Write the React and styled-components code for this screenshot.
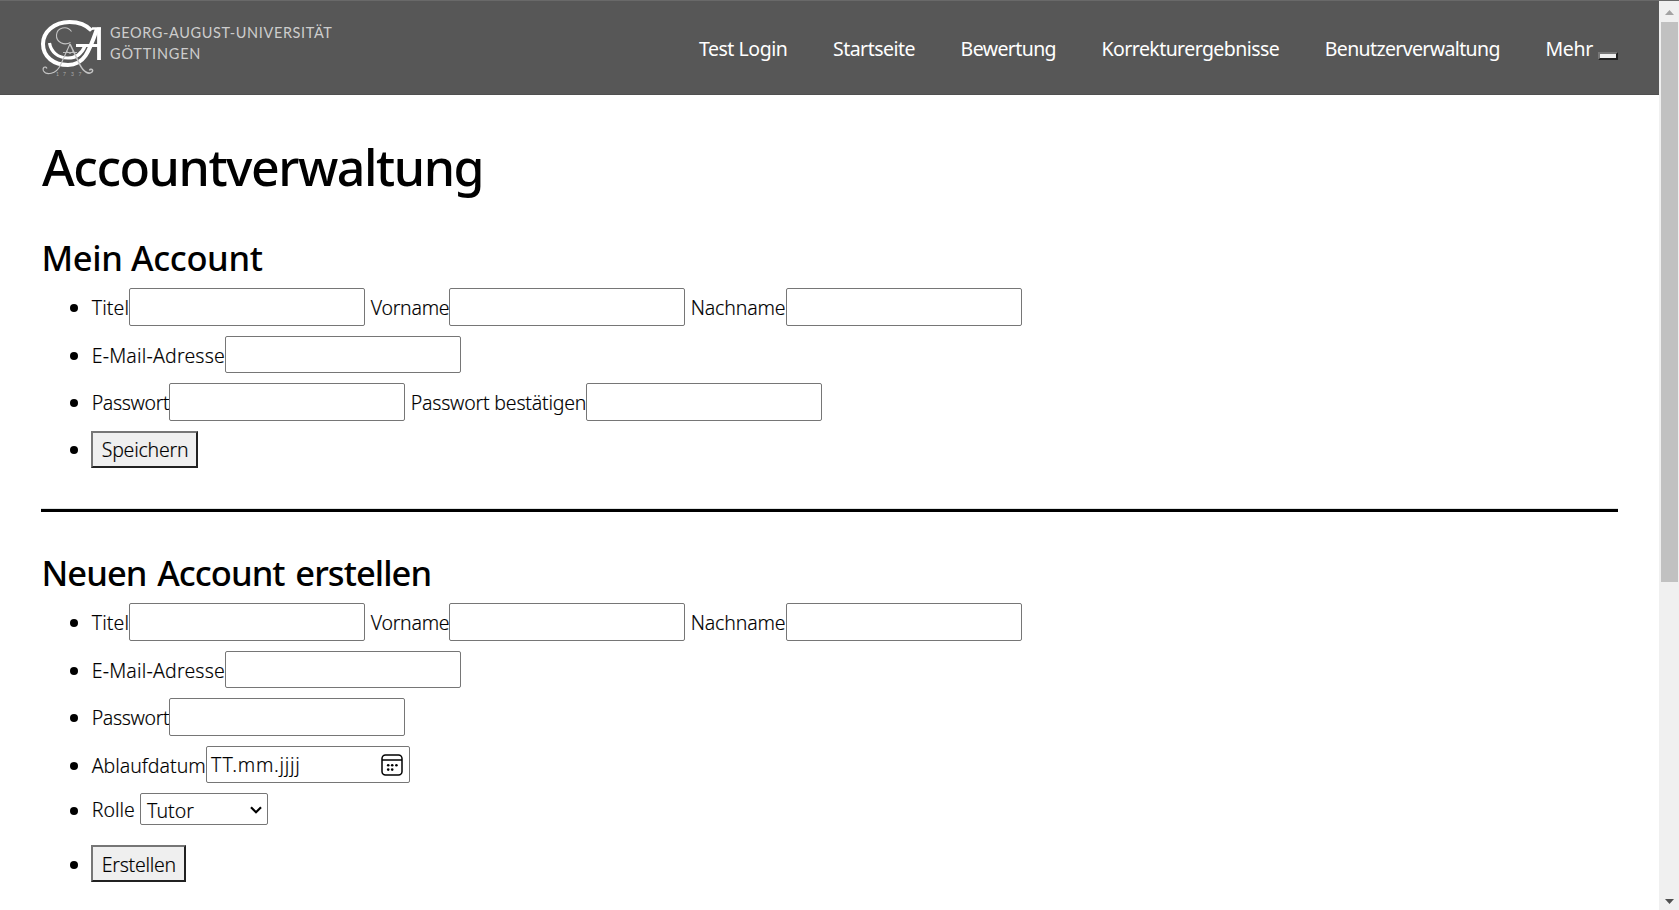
import React from 'react';
import styled, { createGlobalStyle, css } from 'styled-components';

const GlobalStyle = createGlobalStyle`
  * { box-sizing: border-box; }
  body {
    margin: 0;
    overflow: hidden;
    background: #fff;
    color: #000;
    font-family: 'Noto Sans', 'Open Sans', sans-serif;
    font-size: 19.5px;
  }
`;

const Window = styled.div`
  display: grid;
  grid-template-columns: 1fr 20px;
  height: 910px;
  border-top: 1px solid #696969;
  overflow: hidden;
`;

const Page = styled.div`
  min-width: 0;
`;

const Header = styled.header`
  display: flex;
  justify-content: space-between;
  align-items: center;
  height: 94px;
  padding: 0 41px 0 40px;
  background: #575757;
  border-bottom: 1px solid #4f4f4f;
  color: #fff;
`;

const Brand = styled.div`
  display: flex;
  gap: 8px;
`;

const BrandMark = styled.svg`
  display: block;
  width: 62px;
  height: 60px;
`;

const BrandName = styled.div`
  padding-top: 4px;
  font: 400 14.5px/21px Lato, sans-serif;
  color: #cdcdcd;
  white-space: nowrap;
`;

const BrandLine = styled.div`
  letter-spacing: ${(p) => p.$spacing}px;
`;

const Nav = styled.nav`
  display: flex;
  align-items: center;
  gap: 45.6px;
`;

const NavLink = styled.a`
  padding-top: 2px;
  line-height: 26px;
  white-space: nowrap;
  letter-spacing: ${(p) => p.$spacing}px;
`;

const MoreMenu = styled.div`
  display: flex;
  align-items: center;
  gap: 5px;
`;

const raised = css`
  border: 2px solid;
  border-color: #767676 #212121 #212121 #767676;
  border-radius: 0;
  background: #efefef;
  color: #000;
`;

const MoreButton = styled.button`
  ${raised}
  width: 20px;
  height: 8px;
  margin: 16px 0 0;
  padding: 0;
`;

const Main = styled.main`
  padding: 42px 41px 0;
`;

const Title = styled.h1`
  margin: 0 0 40px;
  padding-left: 1px;
  font-size: 50px;
  line-height: 60px;
  font-weight: 500;
  letter-spacing: -1.45px;
`;

const SectionTitle = styled.h2`
  margin: 0 0 9px;
  padding-left: 0.5px;
  font-size: 34.5px;
  line-height: 42px;
  font-weight: 500;
  letter-spacing: ${(p) => p.$spacing}px;
  word-spacing: ${(p) => p.$wordSpacing ?? 0}px;
`;

const Divider = styled.hr`
  height: 4px;
  margin: 40px 0;
  border: 0;
  border-top: 1px solid #dfe3e3;
  background: #000;
`;

const FieldList = styled.ul`
  margin: 0;
  padding: 0 0 0 29px;
  list-style: none;
`;

const Row = styled.li`
  display: flex;
  height: ${(p) => p.$height}px;
  margin-bottom: ${(p) => p.$gap ?? 10}px;
  font-weight: 350;
  -webkit-text-stroke: 0.15px #000;

  &:last-child { margin-bottom: 0; }

  &::before {
    content: '';
    flex: none;
    width: 8px;
    height: 8px;
    margin: ${(p) => p.$bullet ?? 16}px 13px 0 0;
    border-radius: 50%;
    background: #000;
  }
`;

const Label = styled.label`
  flex: none;
  width: ${(p) => p.$width}px;
  padding-left: 0.7px;
  line-height: ${(p) => p.$line ?? 39}px;
  letter-spacing: ${(p) => p.$spacing ?? 0}px;
  white-space: nowrap;
`;

const fieldBox = css`
  height: 100%;
  border: 1px solid #767676;
  border-radius: 2px;
  background: #fff;
`;

const TextInput = styled.input`
  ${fieldBox}
  width: 236px;
  margin: 0 5px 0 0;
  padding: 1px 5px;
  font: inherit;
  outline: none;
`;

const DateInput = styled.div`
  ${fieldBox}
  display: flex;
  justify-content: space-between;
  width: 204px;
  padding: 0 6px 0 4px;
  line-height: 36px;
  letter-spacing: 0.7px;
`;

const CalendarIcon = styled.svg`
  width: 22px;
  height: 22px;
  margin-top: 7px;
`;

const Select = styled.div`
  ${fieldBox}
  display: flex;
  justify-content: space-between;
  width: 128px;
  padding: 0 5px 0 6px;
  line-height: 34px;
`;

const Chevron = styled.svg`
  width: 12px;
  height: 8px;
  margin-top: 12px;
`;

const Button = styled.button`
  ${raised}
  width: ${(p) => p.$width}px;
  height: 37px;
  padding: ${(p) => p.$drop ?? 0}px 0 0 8.7px;
  font: inherit;
  line-height: 33px;
  text-align: left;
  white-space: nowrap;
  letter-spacing: ${(p) => p.$spacing}px;
`;

const Scrollbar = styled.div`
  display: flex;
  flex-direction: column;
  align-items: center;
  padding-left: 1px;
  background: #f0f0f0;
`;

const ScrollArrow = styled.svg`
  flex: none;
  width: 19px;
  height: 21px;
`;

const ScrollThumb = styled.div`
  width: 17px;
  height: 560px;
  background: #c1c1c1;
`;

const ScrollTrack = styled.div`
  flex: 1;
`;

const NAV = [
  ['Test Login', -0.45],
  ['Startseite', -0.52],
  ['Bewertung', -0.6],
  ['Korrekturergebnisse', -0.57],
  ['Benutzerverwaltung', -0.63],
];

function Logo() {
  return (
    <Brand>
      <BrandMark viewBox="40 18 62 60" fill="none">
        <g stroke="#fff">
          <path d="M91.5 30.5C86 24.5 78 22 69.500 22C54 22 43 32 43 44C43 57 54 65 68 65C84 65 89 52 97 29" strokeWidth="4" />
          <path d="M49.500 43C51 52 58 58 68 58C77 58 82 53 85 46" strokeWidth="3.200" />
          <path d="M76 45.500H99" strokeWidth="3" />
          <path d="M92 28.500H101" strokeWidth="2.500" />
          <path d="M99 27.500V60" strokeWidth="3.800" />
        </g>
        <g stroke="#c4c4c4" strokeWidth="1.100">
          <path d="M71.500 31.500C67 25 57 27.500 56.500 35C56 42 64 46 70.500 42.500" />
          <path d="M70 44L60.500 65C56 75 46 75 43.500 71C42 67.500 45.500 65.500 47 68.500" />
          <path d="M70 44L79.500 64C84 73 89 74.500 92 72C94 69.500 90.500 68 89.500 70.500" strokeWidth="1.600" />
          <path d="M63 52.500H77M66 51L70 53.500L74 51" strokeWidth="0.900" />
        </g>
        <text x="56 63 71 78.500" y="75.500" fill="#a9a9a9" fontFamily="Lato, sans-serif" fontSize="5">1737</text>
      </BrandMark>
      <BrandName>
        <BrandLine $spacing={0.62}>GEORG-AUGUST-UNIVERSITÄT</BrandLine>
        <BrandLine $spacing={0.8}>GÖTTINGEN</BrandLine>
      </BrandName>
    </Brand>
  );
}

function NameRow() {
  return (
    <Row $height={38}>
      <Label $width={38} $spacing={0.1}>Titel</Label>
      <TextInput />
      <Label $width={79} $spacing={-0.25}>Vorname</Label>
      <TextInput />
      <Label $width={96} $spacing={-0.15}>Nachname</Label>
      <TextInput />
    </Row>
  );
}

function EmailRow() {
  return (
    <Row $height={37}>
      <Label $width={134} $spacing={0.2}>E-Mail-Adresse</Label>
      <TextInput />
    </Row>
  );
}

function PasswordRow({ confirm }) {
  return (
    <Row $height={38}>
      <Label $width={78} $spacing={-0.35}>Passwort</Label>
      <TextInput type="password" />
      {confirm && (
        <>
          <Label $width={176} $spacing={-0.2}>Passwort bestätigen</Label>
          <TextInput type="password" />
        </>
      )}
    </Row>
  );
}

export default function App() {
  return (
    <Window>
      <GlobalStyle />
      <Page>
        <Header>
          <Logo />
          <Nav>
            {NAV.map(([name, spacing]) => (
              <NavLink key={name} $spacing={spacing}>{name}</NavLink>
            ))}
            <MoreMenu>
              <NavLink $spacing={-0.3}>Mehr</NavLink>
              <MoreButton aria-label="Mehr" />
            </MoreMenu>
          </Nav>
        </Header>
        <Main>
          <Title>Accountverwaltung</Title>
          <SectionTitle $spacing={-0.37}>Mein Account</SectionTitle>
          <FieldList>
            <NameRow />
            <EmailRow />
            <PasswordRow confirm />
            <Row $height={37} $bullet={15}>
              <Button $width={107} $spacing={-0.2}>Speichern</Button>
            </Row>
          </FieldList>
          <Divider />
          <SectionTitle $spacing={-0.93} $wordSpacing={2.6}>Neuen Account erstellen</SectionTitle>
          <FieldList>
            <NameRow />
            <EmailRow />
            <PasswordRow />
            <Row $height={37}>
              <Label $width={115}>Ablaufdatum</Label>
              <DateInput>
                TT.mm.jjjj
                <CalendarIcon viewBox="0 0 22 22" fill="none" stroke="#000" strokeWidth="1.500">
                  <rect x="1" y="1" width="20" height="20" rx="3.500" />
                  <path d="M1 6H21" />
                  <g fill="#000" stroke="none">
                    <circle cx="7.200" cy="11.300" r="1.300" />
                    <circle cx="11.200" cy="11.300" r="1.300" />
                    <circle cx="15.400" cy="11.300" r="1.300" />
                    <circle cx="7.200" cy="15.600" r="1.300" />
                    <circle cx="11.200" cy="15.600" r="1.300" />
                  </g>
                </CalendarIcon>
              </DateInput>
            </Row>
            <Row $height={32} $gap={20} $bullet={14}>
              <Label $width={49} $line={33}>Rolle</Label>
              <Select>
                Tutor
                <Chevron viewBox="0 0 12 8" fill="none" stroke="#000" strokeWidth="2.200">
                  <path d="M1 1.200L6 6.200L11 1.200" />
                </Chevron>
              </Select>
            </Row>
            <Row $height={37}>
              <Button $width={95} $spacing={-0.25} $drop={1}>Erstellen</Button>
            </Row>
          </FieldList>
        </Main>
      </Page>
      <Scrollbar>
        <ScrollArrow viewBox="0 0 19 21" fill="#a3a3a3">
          <path d="M5 14L9.500 9L14 14Z" />
        </ScrollArrow>
        <ScrollThumb />
        <ScrollTrack />
        <ScrollArrow viewBox="0 0 19 21" fill="#505050">
          <path d="M5 10L9.500 15L14 10Z" />
        </ScrollArrow>
      </Scrollbar>
    </Window>
  );
}
